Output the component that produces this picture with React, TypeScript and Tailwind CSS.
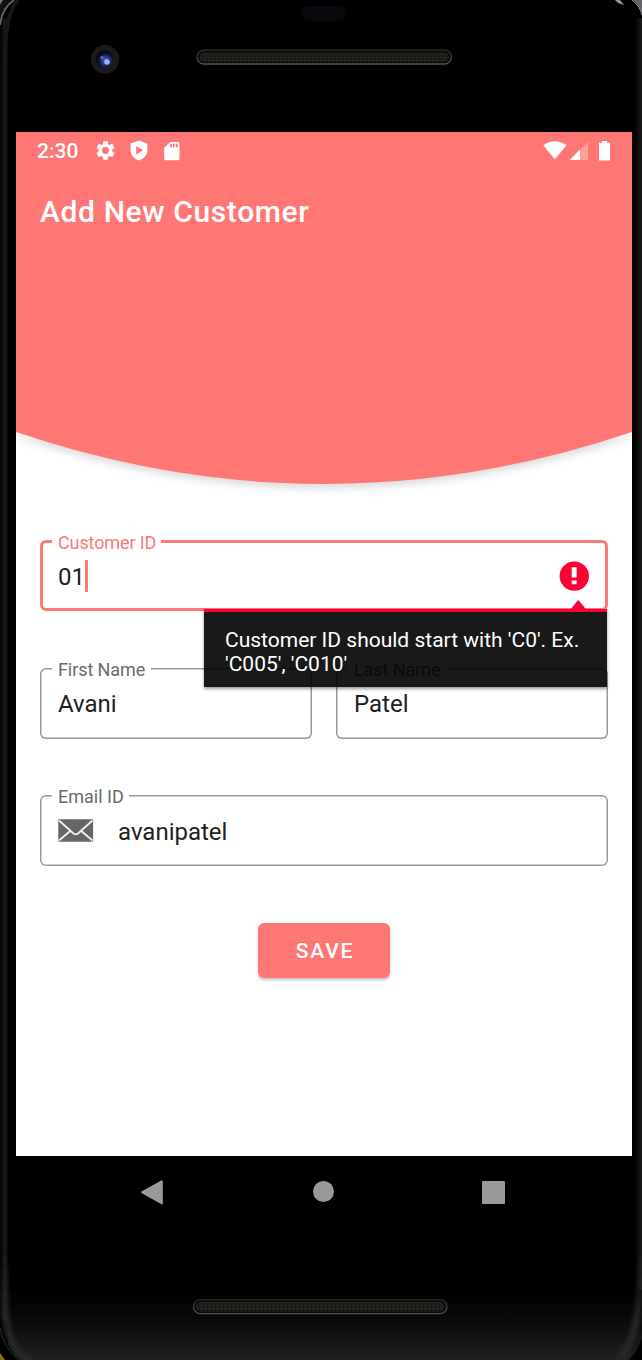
import type { ReactNode } from "react";

function PhoneFrame() {
  return (
    <svg className="absolute inset-0" width="642" height="1360" viewBox="0 0 642 1360" aria-hidden="true">
      <defs>
        <linearGradient id="left" x1="0" x2="1" y1="0" y2="0">
          <stop offset="0" stopColor="#050505" />
          <stop offset=".28" stopColor="#090909" />
          <stop offset=".45" stopColor="#1c1c1c" />
          <stop offset=".65" stopColor="#151515" />
          <stop offset="1" stopColor="#000" />
        </linearGradient>
        <linearGradient id="right" x1="0" x2="1" y1="0" y2="0">
          <stop offset="0" stopColor="#000" />
          <stop offset=".6" stopColor="#10100f" />
          <stop offset="1" stopColor="#1c1c1a" />
        </linearGradient>
        <linearGradient id="chin" x1="0" x2="0" y1="0" y2="1">
          <stop offset="0" stopColor="#000" />
          <stop offset=".4" stopColor="#090909" />
          <stop offset="1" stopColor="#202020" />
        </linearGradient>
        <linearGradient id="rim" x1="0" x2="0" y1="0" y2="1">
          <stop offset="0" stopColor="#252525" />
          <stop offset="1" stopColor="#555350" />
        </linearGradient>
        <linearGradient id="fade" x1="0" x2="0" y1="0" y2="1">
          <stop offset="0" stopColor="#2a2a2a" stopOpacity="0" />
          <stop offset=".6" stopColor="#2a2a2a" />
        </linearGradient>
        <pattern id="mesh" width="4" height="3" patternUnits="userSpaceOnUse">
          <rect width="4" height="3" fill="#1a1816" />
          <path d="M0 .5h1M2 .5h1M1 2h1" stroke="#332f28" strokeWidth="1" />
        </pattern>
        <radialGradient id="lens" cx=".58" cy=".6" r=".55">
          <stop offset="0" stopColor="#6f8ae0" />
          <stop offset=".35" stopColor="#2a4090" />
          <stop offset=".75" stopColor="#0d1336" />
          <stop offset="1" stopColor="#050510" />
        </radialGradient>
        <filter id="soft" x="-100%" width="300%" y="-20%" height="140%"><feGaussianBlur stdDeviation="2.5" /></filter>
        <filter id="slight" x="-50%" width="200%" y="-50%" height="200%"><feGaussianBlur stdDeviation=".7" /></filter>
      </defs>
      <rect width="642" height="1360" fill="#000" />
      <rect x="0" y="18" width="9" height="1302" fill="url(#left)" />
      <rect x="635" y="18" width="7" height="1322" fill="url(#right)" />
      <rect x="8" y="1290" width="634" height="70" fill="url(#chin)" />
      <path d="M5 1250V1305Q5 1350 32 1362M640 1250V1290Q637 1342 618 1360" fill="none" stroke="url(#fade)" strokeWidth="6" filter="url(#soft)" />
      <path d="M0 1315Q2 1345 20 1360H0ZM642 1339Q637 1352 629 1360H642Z" fill="#000" />
      <path d="M0 1328Q4 1348 18 1360" fill="none" stroke="#303032" strokeWidth="1" />
      <path d="M0 1353L5 1360H0Z" fill="#857610" />
      <path d="M0 0H12Q1 10 0 25Z" fill="#111" />
      <path d="M0 0H3L0 5Z" fill="#77736f" />
      <path d="M0 25Q2 8 14 0" fill="none" stroke="#68696a" strokeWidth="1.6" />
      <path d="M5 60Q4 15 20 -4" fill="none" stroke="#191919" strokeWidth="4" filter="url(#slight)" />
      <path d="M615 0H620L624 5L618 3Z" fill="#8c9897" />
      <path d="M633 0H642V13Q638 4 633 0Z" fill="#66646a" />
      <path d="M632 0Q640 6 642 15" fill="none" stroke="#9694a0" strokeWidth="1" />
      <rect x="301" y="6" width="45" height="15" rx="7.5" fill="#08090d" />
      <circle cx="105" cy="59.3" r="14.3" fill="#1b191b" />
      <circle cx="104.5" cy="59" r="8.5" fill="url(#lens)" />
      <circle cx="107" cy="62" r="2.7" fill="#9cb1f4" filter="url(#slight)" />
      <circle cx="102" cy="57.5" r="1.6" fill="#5570cc" filter="url(#slight)" />
      <rect x="197" y="50" width="254.5" height="14" rx="7" fill="#0b0b0a" stroke="url(#rim)" strokeWidth="1.3" />
      <rect x="199.5" y="52.5" width="249" height="9.5" rx="4.7" fill="url(#mesh)" />
      <rect x="193.5" y="1299.7" width="253.5" height="14" rx="7" fill="#0b0b0a" stroke="url(#rim)" strokeWidth="1.3" />
      <rect x="196" y="1302" width="248.5" height="9.5" rx="4.7" fill="url(#mesh)" />
    </svg>
  );
}

function StatusBar() {
  return (
    <div className="flex h-[37px] items-center pr-[22px] pl-[21px] text-white">
      <span className="w-[57px] pt-px text-[21px] leading-[37px] font-medium">2:30</span>
      <svg width="23" height="23" viewBox="0 0 24 24" fill="currentColor">
        <path d="M19.14 12.94c.04-.3.06-.61.06-.94 0-.32-.02-.64-.07-.94l2.03-1.58a.49.49 0 0 0 .12-.61l-1.92-3.32a.488.488 0 0 0-.59-.22l-2.39.96c-.5-.38-1.03-.7-1.62-.94l-.36-2.54a.484.484 0 0 0-.48-.41h-3.84c-.24 0-.43.17-.47.41l-.36 2.54c-.59.24-1.13.57-1.62.94l-2.39-.96c-.22-.08-.47 0-.59.22L2.74 8.87c-.12.21-.08.47.12.61l2.03 1.58c-.05.3-.09.63-.09.94s.02.64.07.94l-2.03 1.58a.49.49 0 0 0-.12.61l1.92 3.32c.12.22.37.29.59.22l2.39-.96c.5.38 1.03.7 1.62.94l.36 2.54c.05.24.24.41.48.41h3.84c.24 0 .44-.17.47-.41l.36-2.54c.59-.24 1.13-.56 1.62-.94l2.39.96c.22.08.47 0 .59-.22l1.92-3.32c.12-.22.07-.47-.12-.61l-2.01-1.58zM12 15.6A3.6 3.6 0 1 1 12 8.400a3.600 3.600 0 0 1 0 7.200z" />
      </svg>
      <svg width="18" height="21" viewBox="0 0 18 21" fill="currentColor" className="ml-[13px]">
        <path fillRule="evenodd" d="M9 .4L.6 3.600V10Q.6 17.500 9 20.600Q17.400 17.500 17.400 10V3.600ZM6.200 6V14.700L13 10.350Z" />
      </svg>
      <svg width="16" height="20" viewBox="0 0 16 20" fill="currentColor" className="ml-4">
        <path fillRule="evenodd" d="M6 1H14Q15.500 1 15.500 2.500V17.500Q15.500 19.200 14 19.200H1.800Q.2 19.200.2 17.500V7ZM6.200 2.700V6.200H8V2.700ZM9 2.700V6.200H10.800V2.700ZM11.800 2.700V6.200H13.600V2.700Z" />
      </svg>
      <svg width="67" height="21" viewBox="0 0 67 21" fill="currentColor" className="ml-auto">
        <path d="M.3 5.300Q12 -3 23.500 5.300L12.700 18.200Q11.800 19 10.900 18.200Z" />
        <path opacity=".3" d="M45 2V20H27Z" />
        <path d="M37 9.500V20H27.300Q27 19.700 27.700 19Z" />
        <path d="M56 2.700H59V.9H64V2.700H67V20.500H56Z" />
      </svg>
    </div>
  );
}

function Field({ label, active = false, labelClass, children }: { label: string; active?: boolean; labelClass: string; children: ReactNode }) {
  return (
    <div className={`relative flex h-[71px] flex-1 items-center rounded-[6px] ${active ? "border-[3px] border-[#ff7775] pl-[15px]" : "pl-[18px] shadow-[inset_0_0_0_1.5px_#999]"}`}>
      <span className={`absolute bg-white pl-[6px] text-[18px] leading-[20px] whitespace-nowrap ${active ? "-top-[10px] left-[9px] text-[#ff7775]" : "-top-[8px] left-[12px] text-[#6b6b6b]"} ${labelClass}`}>{label}</span>
      {children}
    </div>
  );
}

function ErrorTooltip() {
  return (
    <div className="absolute top-[60px] left-[164px] z-10 w-[402.5px]">
      <svg width="15" height="9" viewBox="0 0 15 9" className="ml-[367px] block"><path d="M0 9L6.500 .7Q7.300 -.1 8.100 .7L14.700 9Z" fill="#ff0033" /></svg>
      <div className="h-[78px] border-t-[3px] border-[#ff0033] bg-black/90 bg-clip-padding pt-[16px] pl-[21px] text-[21px] leading-[24px] text-white shadow-[0_2px_3px_rgba(0,0,0,0.4)]">
        Customer ID should start with 'C0'. Ex.<br />'C005', 'C010'
      </div>
    </div>
  );
}

export default function App() {
  return (
    <div className="relative h-[1360px] w-[642px] overflow-hidden bg-black font-['Roboto',sans-serif]">
      <PhoneFrame />
      <div className="relative w-[648px] px-[16px] pt-[132px]">
        <main className="h-[1024px] w-[616px] overflow-hidden bg-white">
          <header className="relative h-[300px] bg-[#ff7775]">
            <StatusBar />
            <h1 className="pt-[24px] pl-[24px] text-[30px] leading-[38px] font-medium tracking-[0.63px] text-white">Add New Customer</h1>
            <svg className="absolute top-[299px] left-0 drop-shadow-[0_4px_4px_rgba(0,0,0,0.15)]" width="616" height="70" viewBox="0 0 616 70">
              <path d="M0 0V1Q308 105 616 1V0Z" fill="#ff7775" />
            </svg>
            <div className="absolute bottom-0 left-0 h-3 w-full bg-[#ff7775]" />
          </header>
          <form className="px-[24px] pt-[108px] text-[24px] text-[#212121]">
            <div className="relative flex">
              <Field label="Customer ID" active labelClass="w-[109px] tracking-[-0.12px]">
                <span className="pt-[2px]">01</span>
                <span className="h-[32px] w-[3px] bg-[#ff7775]" />
                <svg className="mr-[16px] ml-auto" width="30" height="30" viewBox="0 0 30 30">
                  <circle cx="15.3" cy="15.1" r="14.7" fill="#ff0033" />
                  <path d="M12.700 6.200H17.700V16.500H12.700ZM12.700 19.400H17.700V23.300H12.700Z" fill="#fff" />
                </svg>
              </Field>
              <ErrorTooltip />
            </div>
            <div className="mt-[56.5px] flex gap-[24px]">
              <Field label="First Name" labelClass="w-[99px] tracking-[-0.08px]"><span className="pt-[2px]">Avani</span></Field>
              <Field label="Last Name" labelClass="w-[98px] tracking-[-0.08px]"><span className="pt-[2px]">Patel</span></Field>
            </div>
            <div className="mt-[56.5px] flex">
              <Field label="Email ID" labelClass="w-[77px]">
                <svg width="36" height="23" viewBox="0 0 36 23">
                  <rect x=".3" y=".3" width="34.800" height="22.400" rx="1" fill="#666" />
                  <path d="M1 1.500L15.500 14.500Q17.700 16.300 20 14.500L34.500 1.500M1 21.500L12.500 11.700M34.500 21.500L23 11.700" fill="none" stroke="#f1f1f1" strokeWidth="1.800" />
                </svg>
                <span className="ml-[24px] pt-[2px]">avanipatel</span>
              </Field>
            </div>
            <div className="mt-[57px] flex justify-center">
              <button type="button" className="h-[55px] w-[132px] rounded-[6px] bg-[#ff7775] pt-[2px] pl-[2px] text-[21px] font-medium tracking-[1.87px] text-white shadow-[0_2px_3px_rgba(0,0,0,0.25)]">SAVE</button>
            </div>
          </form>
        </main>
        <nav className="flex h-[72px] w-[616px] items-center pl-[125px]">
          <svg width="22" height="25" viewBox="0 0 22 25"><path d="M.4 11.600L20.300 .5Q21.800 0 21.800 1.200V23.500Q21.800 24.800 20.500 24.200L.4 13Q-.2 12.300.4 11.600Z" fill="#999" /></svg>
          <span className="-mt-px ml-[150px] h-[21px] w-[21px] rounded-full bg-[#999]" />
          <span className="ml-[148px] h-[23px] w-[23px] rounded-[1px] bg-[#999]" />
        </nav>
      </div>
    </div>
  );
}
